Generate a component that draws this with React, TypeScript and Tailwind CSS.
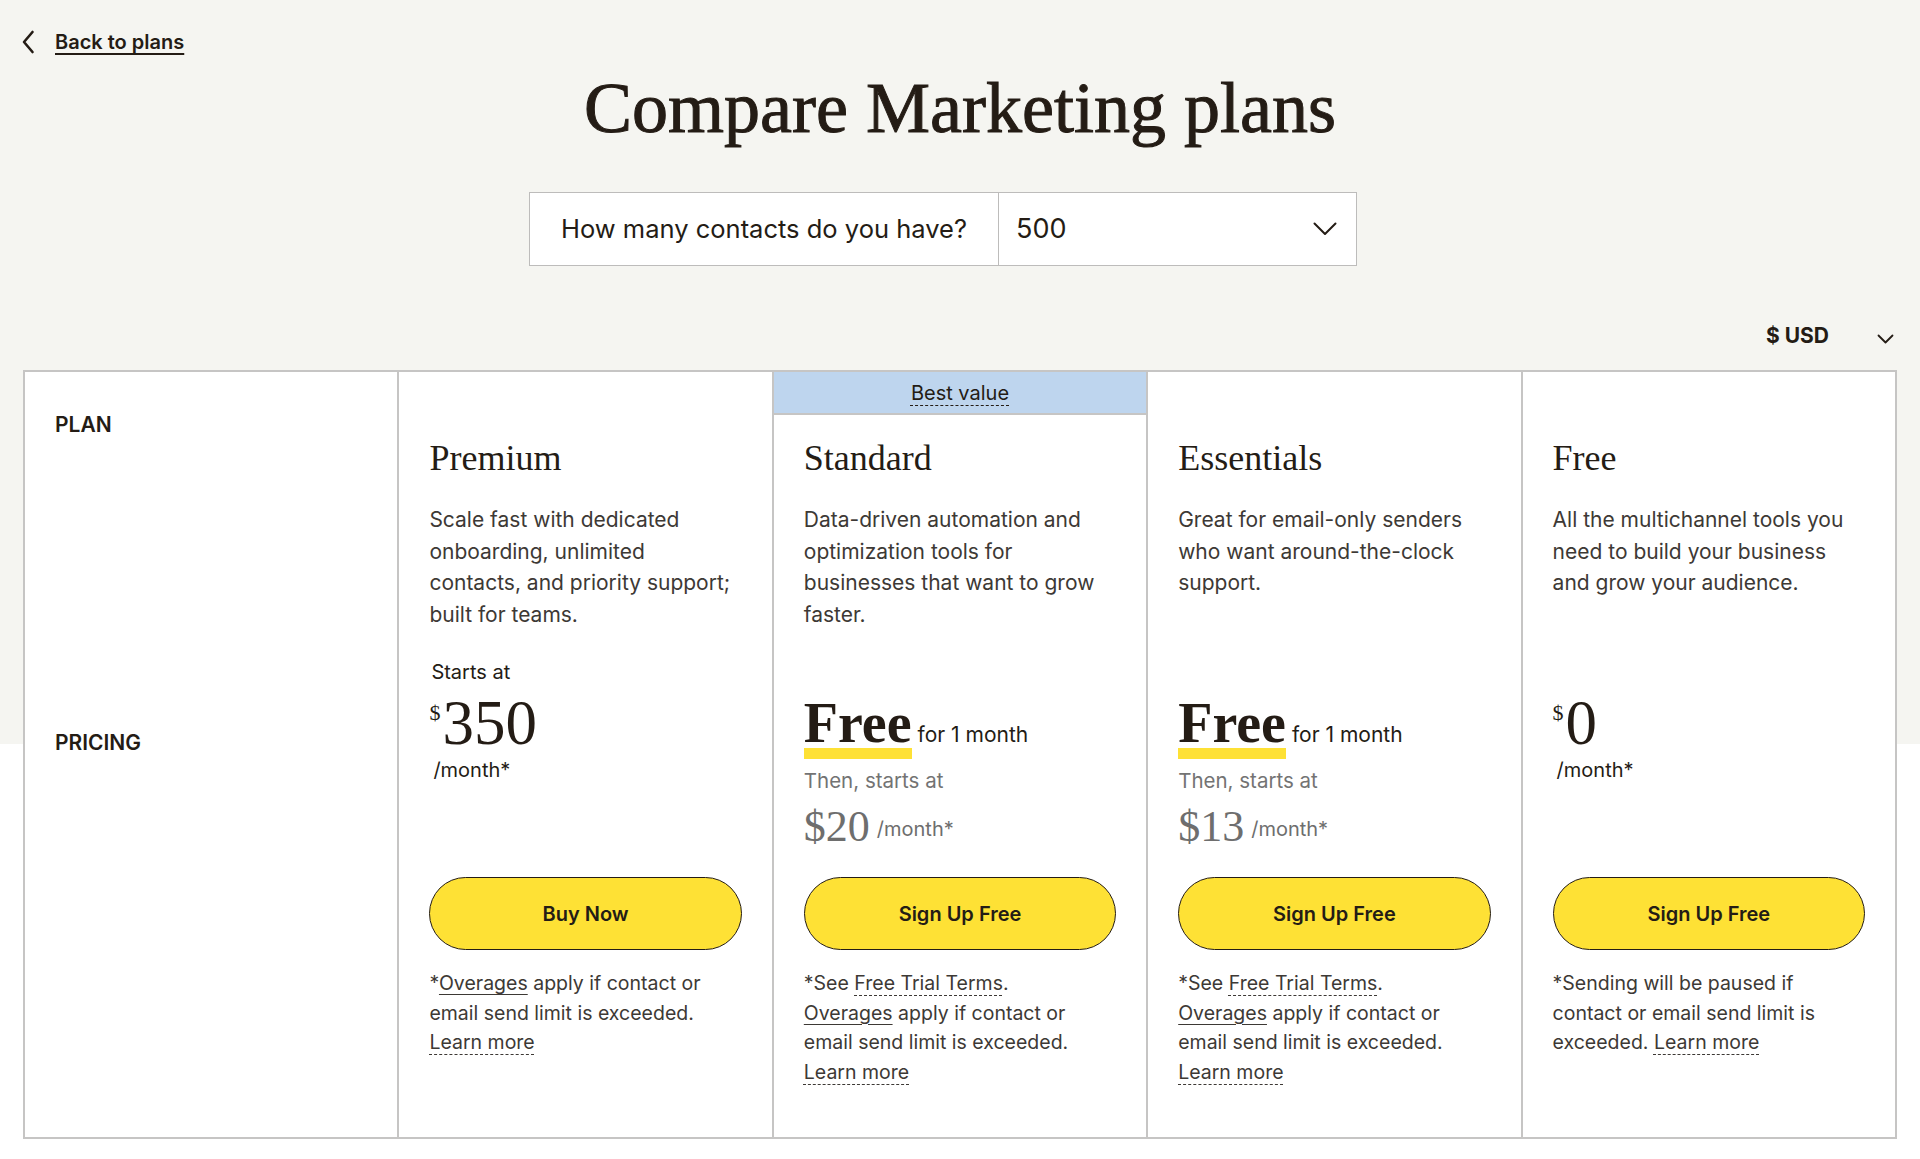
import type { ReactNode } from 'react'

type Plan = {
  name: string
  desc: string
  pricing: 'starts' | 'trial' | 'free'
  amount: string
  cta: string
  bestValue?: boolean
  note: ReactNode
}

function Dashed({ children }: { children: ReactNode }) {
  return <a className="underline decoration-dashed decoration-1 underline-offset-[5px] cursor-pointer">{children}</a>
}

function Solid({ children }: { children: ReactNode }) {
  return <a className="underline decoration-1 underline-offset-[4px] cursor-pointer">{children}</a>
}

const plans: Plan[] = [
  {
    name: 'Premium',
    desc: 'Scale fast with dedicated onboarding, unlimited contacts, and priority support; built for teams.',
    pricing: 'starts',
    amount: '350',
    cta: 'Buy Now',
    note: (
      <>
        *<Solid>Overages</Solid> apply if contact or
        <br />
        email send limit is exceeded.
        <br />
        <Dashed>Learn more</Dashed>
      </>
    ),
  },
  {
    name: 'Standard',
    desc: 'Data-driven automation and optimization tools for businesses that want to grow faster.',
    pricing: 'trial',
    amount: '$20',
    cta: 'Sign Up Free',
    bestValue: true,
    note: (
      <>
        *See <Dashed>Free Trial Terms</Dashed>.
        <br />
        <Solid>Overages</Solid> apply if contact or
        <br />
        email send limit is exceeded.
        <br />
        <Dashed>Learn more</Dashed>
      </>
    ),
  },
  {
    name: 'Essentials',
    desc: 'Great for email-only senders who want around-the-clock support.',
    pricing: 'trial',
    amount: '$13',
    cta: 'Sign Up Free',
    note: (
      <>
        *See <Dashed>Free Trial Terms</Dashed>.
        <br />
        <Solid>Overages</Solid> apply if contact or
        <br />
        email send limit is exceeded.
        <br />
        <Dashed>Learn more</Dashed>
      </>
    ),
  },
  {
    name: 'Free',
    desc: 'All the multichannel tools you need to build your business and grow your audience.',
    pricing: 'free',
    amount: '0',
    cta: 'Sign Up Free',
    note: (
      <>
        *Sending will be paused if
        <br />
        contact or email send limit is
        <br />
        exceeded. <Dashed>Learn more</Dashed>
      </>
    ),
  },
]

function Pricing({ plan }: { plan: Plan }) {
  if (plan.pricing === 'trial') {
    return (
      <div className="h-[221px] pt-[39px]">
        <div className="flex items-baseline gap-[6px]">
          <span className="inline-flex flex-col">
            <span className="[font-family:'Liberation_Serif',serif] text-[56px] font-bold leading-none">Free</span>
            <span className="-mt-[3px] h-[11px] bg-[#fee135]" />
          </span>
          <span className="text-[21px]">for 1 month</span>
        </div>
        <p className="mt-[8px] text-[20.5px] leading-[28px] text-[#737373]">Then, starts at</p>
        <p className="mt-[10px] flex items-center gap-[7px] text-[#6e6e6e]">
          <span className="[font-family:'Liberation_Serif',serif] text-[44px] leading-none">{plan.amount}</span>
          <span className="mt-[4px] text-[20px]">/month*</span>
        </p>
      </div>
    )
  }

  return (
    <div className="h-[221px]">
      {plan.pricing === 'starts' ? (
        <p className="pl-[2px] text-[20px] leading-[32px]">Starts at</p>
      ) : (
        <div className="h-[32px]" />
      )}
      <div className="mt-[4px] flex items-start [font-family:'Liberation_Serif',serif] leading-none">
        <span className="mt-[10px] text-[22px]">$</span>
        <span className="ml-[2px] text-[63px]">{plan.amount}</span>
      </div>
      <p className="mt-[1px] pl-[4px] text-[20px] leading-[28px]">/month*</p>
    </div>
  )
}

function PlanColumn({ plan }: { plan: Plan }) {
  return (
    <div className="flex flex-col border-l-2 border-[#c6c5c4] pb-[50px]">
      {plan.bestValue ? (
        <div className="flex h-[43px] items-center justify-center border-b-2 border-[#c6c5c4] bg-[#bed5ee] text-[20px]">
          <Dashed>Best value</Dashed>
        </div>
      ) : (
        <div className="h-[43px]" />
      )}
      <div className="px-[30px]">
        <h2 className="mt-[21px] [font-family:'Liberation_Serif',serif] text-[36px] leading-[44px]">{plan.name}</h2>
        <p className="mt-[24px] h-[152px] text-[21px] leading-[31.5px] text-[#3d3935]">{plan.desc}</p>
        <Pricing plan={plan} />
        <button className="flex h-[73px] w-full items-center justify-center rounded-full border-[1.5px] border-[#241c15] bg-[#fee135] text-[20px] font-semibold">
          {plan.cta}
        </button>
        <p className="mt-[19px] text-[19.5px] leading-[29.5px] text-[#3d3935]">{plan.note}</p>
      </div>
    </div>
  )
}

export default function App() {
  return (
    <div className="min-h-screen bg-[linear-gradient(to_bottom,#f5f5f1_744px,#ffffff_744px)] pb-[20px] [font-family:Inter,sans-serif] text-[#241c15]">
      <div className="flex h-[24px] translate-y-[30px] items-center pl-[21px]">
        <svg width="14" height="24" viewBox="0 0 14 24" fill="none" stroke="#241c15" strokeWidth="2.6" strokeLinecap="round" strokeLinejoin="round">
          <path d="M11.5 2 3 12l8.5 10" />
        </svg>
        <a className="ml-[20px] text-[20px] font-semibold underline decoration-[1.5px] underline-offset-[4px] cursor-pointer">Back to plans</a>
      </div>

      <h1 className="mt-[48px] text-center [font-family:'Liberation_Serif',serif] text-[72px] leading-none [-webkit-text-stroke:1px_#241c15]">
        Compare Marketing plans
      </h1>

      <div className="mt-[48px] flex justify-center pr-[34px]">
        <div className="flex h-[74px] w-[828px] border border-[#bdbcbb] bg-white">
          <div className="flex w-[469px] items-center justify-center border-r border-[#bdbcbb] text-[25.5px]">
            How many contacts do you have?
          </div>
          <div className="flex flex-1 items-center justify-between pl-[17px] pr-[19px] text-[27px]">
            <span>500</span>
            <svg width="24" height="14" viewBox="0 0 24 14" fill="none" stroke="#241c15" strokeWidth="2" strokeLinecap="round" strokeLinejoin="round">
              <path d="M1.5 1.5 12 12 22.5 1.5" />
            </svg>
          </div>
        </div>
      </div>

      <div className="mt-[56px] flex h-[28px] items-center justify-end pr-[26px]">
        <span className="text-[21px] font-bold">$ USD</span>
        <svg className="ml-[48px] mt-[6px]" width="17" height="10" viewBox="0 0 17 10" fill="none" stroke="#241c15" strokeWidth="1.8" strokeLinecap="round" strokeLinejoin="round">
          <path d="M1.5 1.5 8.5 8.5 15.5 1.5" />
        </svg>
      </div>

      <div className="mx-[23px] mt-[20px] grid grid-cols-5 border-2 border-l-0 border-[#c6c5c4] bg-white">
        <div className="flex flex-col border-l-2 border-[#c6c5c4] px-[30px] pt-[39px] text-[21px] font-semibold leading-[28px]">
          <span>PLAN</span>
          <span className="mt-[290px]">PRICING</span>
        </div>
        {plans.map(plan => (
          <PlanColumn key={plan.name} plan={plan} />
        ))}
      </div>
    </div>
  )
}
